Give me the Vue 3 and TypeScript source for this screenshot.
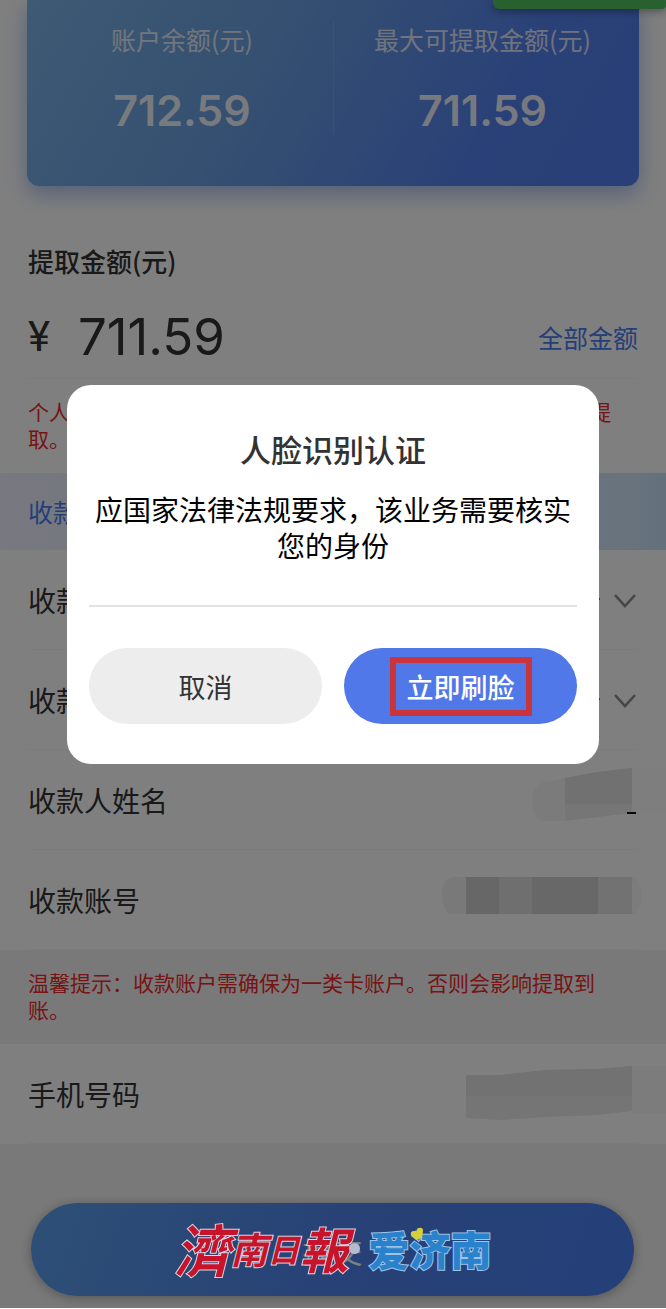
<script setup lang="ts">
import { ref } from 'vue'

interface Choice {
  id: string
  label: string
  value: string
}

const balances = [
  { label: '账户余额(元)', amount: '712.59' },
  { label: '最大可提取金额(元)', amount: '711.59' },
]

const choices = ref<Choice[]>([
  { id: 'method', label: '收款方式', value: '银行卡' },
  { id: 'type', label: '收款类型', value: '一类卡' },
])

const amount = ref('711.59')
</script>

<template>
  <div class="page">
    <main class="content">
      <section class="card">
        <div v-for="item in balances" :key="item.label" class="balance">
          <span class="balance-label">{{ item.label }}</span>
          <strong class="balance-amount">{{ item.amount }}</strong>
        </div>
      </section>
      <div class="toast"></div>

      <section class="withdraw">
        <label class="withdraw-title" for="amount">提取金额(元)</label>
        <div class="amount-row">
          <span class="currency">¥</span>
          <input id="amount" v-model="amount" class="amount-input" type="text" inputmode="decimal" />
          <a class="all-link" href="#">全部金额</a>
        </div>
      </section>
      <p class="notice">个人账户需保留 1元作为账户余额，其余部分金额均可以申请提取。</p>

      <h2 class="band">收款信息</h2>

      <div v-for="choice in choices" :key="choice.id" class="row">
        <label :for="choice.id">{{ choice.label }}</label>
        <select :id="choice.id" v-model="choice.value" class="select">
          <option>{{ choice.value }}</option>
        </select>
        <svg class="chevron" viewBox="0 0 24 16" aria-hidden="true">
          <path d="M2 3 L12 14 L22 3" fill="none" stroke="#8c8c8c" stroke-width="2.6" />
        </svg>
      </div>
      <div class="row">
        <span>收款人姓名</span>
        <svg class="mask" viewBox="0 0 210 60" aria-hidden="true">
          <path d="M109 8 L88 12 Q76 17 76 30 Q77 49 86 51 L109 51Z" fill="#f7f7f7" />
          <path d="M109 8 L142 2 L176 -2 V43 L142 47 L109 51Z" fill="#ececec" />
          <path d="M109 8 L142 2 L176 -2 V34 H109Z" fill="#e2e2e2" />
          <path d="M176 -2 H210 V43 H176Z" fill="#fcfcfc" />
          <path d="M171 43 H180" stroke="#111" stroke-width="2" />
        </svg>
      </div>
      <div class="row">
        <span>收款账号</span>
        <svg class="mask" viewBox="0 0 210 60" aria-hidden="true">
          <path d="M10 7 H-2 Q-14 8 -14 25 Q-13 44 -4 44 H10Z" fill="#f3f2f2" />
          <path d="M10 7 H43 V44 H10Z" fill="#cfcfcf" />
          <path d="M43 7 H76 V44 H43Z" fill="#dfdfdf" />
          <path d="M76 7 H142 V44 H76Z" fill="#d0d0d0" />
          <path d="M142 7 H176 V44 H142Z" fill="#e4e4e4" />
          <path d="M176 7 H179 Q186 15 186 25 Q186 37 179 44 H176Z" fill="#f8f8f8" />
        </svg>
      </div>

      <p class="notice tip">温馨提示：收款账户需确保为一类卡账户。否则会影响提取到账。</p>

      <div class="row">
        <span>手机号码</span>
        <svg class="mask" viewBox="0 0 210 60" aria-hidden="true">
          <path d="M10 11 H45 L90 6 L142 5 L176 2 V47 L142 51 L90 53 L45 56 L10 54Z" fill="#ebebeb" />
          <path d="M10 11 H45 L90 6 L142 5 L176 2 V32 H10Z" fill="#e4e4e4" />
          <path d="M176 2 H210 V49 H176Z" fill="#f8f8f8" />
        </svg>
      </div>

      <div class="footer">
        <button class="submit" type="button">提交</button>
      </div>
    </main>

    <div class="overlay">
      <section class="dialog" role="dialog" aria-labelledby="dialog-title">
        <h1 id="dialog-title">人脸识别认证</h1>
        <p>应国家法律法规要求，该业务需要核实您的身份</p>
        <div class="actions">
          <button class="action" type="button">取消</button>
          <button class="action primary" type="button"><span class="marker">立即刷脸</span></button>
        </div>
      </section>
    </div>

    <div class="brands">
      <div class="daily"><span class="big">濟</span><span>南</span><span class="small">日</span><span class="mid">報</span></div>
      <i class="dot"></i>
      <div class="love">
        爱济南
        <svg class="heart" viewBox="0 0 14 14" aria-hidden="true">
          <path d="M6 13 L1 8 Q0 4 4 4 Q6 4 7 5 Q6 1 9 1 Q13 0 13 4 L12 11Z" fill="#d5cf38" />
        </svg>
      </div>
    </div>
  </div>
</template>

<style>
body {
  margin: 0;
}
</style>

<style scoped>
.page {
  position: relative;
  overflow: hidden;
  font-family: "Noto Sans CJK SC", sans-serif;
  color: #333;
}
.content {
  background: linear-gradient(#fff 0 240px, #f3f3f3 240px);
}
button,
input,
select {
  font-family: inherit;
  color: inherit;
  border: 0;
  margin: 0;
  padding: 0;
}
.card {
  display: grid;
  grid-template-columns: 1fr 1fr;
  margin: 0 27px;
  padding: 20px 0 52px;
  border-radius: 0 0 12px 12px;
  background: linear-gradient(120deg, #7cb4e8 0%, #6aa0e2 38%, #5482f0 75%, #5080ee 100%);
  box-shadow: 0 8px 22px rgba(60, 110, 220, 0.45);
  color: #fff;
}
.balance {
  display: flex;
  flex-direction: column;
  align-items: center;
  gap: 28px;
  padding-left: 4px;
}
.balance + .balance {
  padding: 0 8px 0 0;
  border-left: 1px solid rgba(255, 255, 255, 0.12);
}
.balance-label {
  font-size: 25px;
  line-height: 38px;
  opacity: 0.8;
}
.balance-amount {
  font: 600 43px/48px Inter, sans-serif;
  opacity: 0.9;
}
.toast {
  position: absolute;
  top: 0;
  right: 0;
  width: 173px;
  height: 9px;
  border-radius: 0 0 4px 6px;
  background: #50c060;
  box-shadow: 0 2px 8px rgba(0, 0, 0, 0.4);
}
.withdraw {
  margin-top: 53px;
  padding: 2px 28px 0;
  background: #fff;
}
.withdraw-title {
  display: block;
  font-size: 26px;
  font-weight: 500;
  line-height: 40px;
}
.amount-row {
  display: flex;
  align-items: center;
  height: 82px;
  padding-top: 15px;
  border-bottom: 1px solid #f7f7f7;
}
.currency {
  width: 50px;
  font: 400 42px/50px Roboto, sans-serif;
}
.amount-input {
  flex: 1;
  min-width: 0;
  background: none;
  font: 400 51px/60px Inter, sans-serif;
}
.all-link {
  color: #4a7cf0;
  font-size: 25px;
  text-decoration: none;
}
.notice {
  margin: 0;
  padding: 19px 50px 21px 28px;
  background: #fff;
  color: #ee2a2a;
  font-size: 21px;
  line-height: 27px;
}
.band {
  margin: 0;
  padding: 0 28px;
  background: linear-gradient(90deg, #f0f2ff, #d2e7fc 94%, #c6e2fa);
  color: #4a7cf0;
  font-size: 25px;
  font-weight: 400;
  line-height: 77px;
}
.row {
  display: flex;
  align-items: center;
  height: 100px;
  padding-left: 28px;
  background: linear-gradient(#f7f7f7, #f7f7f7) 28px 100% / calc(100% - 56px) 1px no-repeat #fff;
  font-size: 28px;
}
.select {
  flex: 1;
  appearance: none;
  background: none;
  font-size: 28px;
  text-align-last: right;
}
.chevron {
  width: 24px;
  height: 16px;
  margin: 0 29px 0 12px;
}
.mask {
  width: 210px;
  height: 60px;
  margin-left: auto;
  overflow: visible;
}
.tip {
  background: #f3f3f3;
}
.footer {
  padding: 59px 32px 12px 31px;
}
.submit {
  width: 100%;
  height: 93px;
  border-radius: 47px;
  background: linear-gradient(110deg, #5ba0ec, #5084ee 50%, #4a7ef4);
  box-shadow: 0 2px 12px rgba(0, 0, 0, 0.3);
  color: #fff;
  font-size: 30px;
}
.overlay {
  position: absolute;
  inset: 0;
  display: flex;
  align-items: flex-start;
  padding: 385px 67px 0;
  background: rgba(0, 0, 0, 0.5);
}
.dialog {
  flex: 1;
  padding: 41px 22px 40px;
  border-radius: 24px;
  background: #fff;
  text-align: center;
}
.dialog h1 {
  margin: 0 0 19px;
  font-size: 31px;
  font-weight: 500;
  line-height: 46px;
}
.dialog p {
  margin: 0;
  padding-bottom: 42px;
  border-bottom: 2px solid #e2e2e2;
  color: #000;
  font-size: 28px;
  line-height: 36px;
}
.actions {
  display: grid;
  grid-template-columns: 1fr 1fr;
  gap: 22px;
  margin-top: 41px;
}
.action {
  display: flex;
  align-items: center;
  justify-content: center;
  height: 76px;
  border-radius: 38px;
  background: #ededed;
  font-size: 27px;
}
.primary {
  background: #5078e8;
  color: #fff;
  font-weight: 500;
}
.marker {
  padding: 0 11px;
  border: 6px solid #c9353d;
  line-height: 47px;
}
.brands {
  position: absolute;
  bottom: 27px;
  left: 0;
  right: 0;
  display: flex;
  align-items: center;
  justify-content: center;
  height: 66px;
}
.daily {
  display: flex;
  align-items: center;
  color: #c8142a;
  font-size: 37px;
  font-style: italic;
  font-weight: 700;
  line-height: 66px;
  -webkit-text-stroke: 2px #dcd6e4;
  paint-order: stroke fill;
}
.big {
  font-size: 56px;
}
.small {
  font-size: 32px;
}
.mid {
  font-size: 49px;
}
.dot {
  width: 11px;
  height: 11px;
  border-radius: 50%;
  background: #b4bccd;
}
.love {
  position: relative;
  margin-left: 9px;
  color: #2a82cd;
  font-size: 41px;
  font-weight: 900;
  line-height: 60px;
  -webkit-text-stroke: 2px #9ec4e8;
  paint-order: stroke fill;
}
.heart {
  position: absolute;
  top: 9px;
  left: 41px;
  width: 14px;
  height: 14px;
}
</style>
